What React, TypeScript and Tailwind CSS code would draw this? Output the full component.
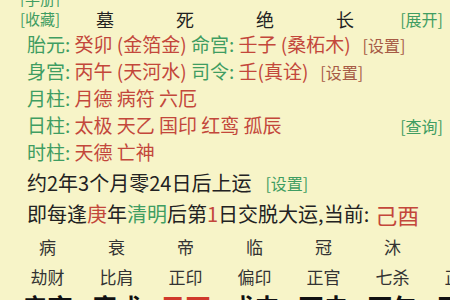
import React from "react";

const G = "text-[#3f9d62]";
const R = "text-[#c3473b]";
const B = "text-[#a65a45]";

function Cols({ items, className }: { items: React.ReactNode[]; className: string }) {
  return (
    <div className={"flex pl-[13px] shrink-0 " + className}>
      {items.map((t, i) => (
        <div key={i} className="w-[69px] shrink-0 text-center whitespace-nowrap">
          {t}
        </div>
      ))}
    </div>
  );
}

export default function App() {
  return (
    <div
      className="w-[450px] h-[300px] overflow-hidden bg-[#f7f4c8] text-[#222] flex flex-col"
      style={{ fontFamily: '"Noto Sans CJK SC", "Noto Sans", sans-serif' }}
    >
      <div className="h-[7px] shrink-0 overflow-hidden flex items-end pl-[20px]">
        <span className={"text-[15px] leading-[16px] " + G}>[手册]</span>
      </div>
      <div className="h-[24px] shrink-0 flex items-center pl-[20px] pr-[7px]">
        <span className={"w-[45px] text-[15px] " + G}>[收藏]</span>
        {["墓", "死", "绝", "长"].map((c) => (
          <span key={c} className="w-[80px] text-center text-[18px] text-[#222]">
            {c}
          </span>
        ))}
        <span className={"ml-auto text-[16px] " + G}>[展开]</span>
      </div>
      <div className="h-[27px] shrink-0 flex items-center pl-[27px] text-[19px] whitespace-nowrap">
        <span className={G}>胎元: </span>
        <span className={R}>&nbsp;癸卯 (金箔金)&nbsp;</span>
        <span className={G}>命宫: </span>
        <span className={R}>&nbsp;壬子 (桑柘木)</span>
        <span className={"ml-[12px] text-[16px] " + B}>[设置]</span>
      </div>
      <div className="h-[27px] shrink-0 flex items-center pl-[27px] text-[19px] whitespace-nowrap">
        <span className={G}>身宫: </span>
        <span className={R}>&nbsp;丙午 (天河水)&nbsp;</span>
        <span className={G}>司令: </span>
        <span className={R}>&nbsp;壬(真诠)</span>
        <span className={"ml-[12px] text-[16px] " + B}>[设置]</span>
      </div>
      <div className="h-[27px] shrink-0 flex items-center pl-[27px] text-[19px] whitespace-nowrap">
        <span className={G}>月柱: </span>
        <span className={R}>&nbsp;月德 病符 六厄</span>
      </div>
      <div className="h-[27px] shrink-0 flex items-center pl-[27px] pr-[7px] text-[19px] whitespace-nowrap">
        <span className={G}>日柱: </span>
        <span className={R}>&nbsp;太极 天乙 国印 红鸾 孤辰</span>
        <span className={"ml-auto text-[16px] " + G}>[查询]</span>
      </div>
      <div className="h-[27px] shrink-0 flex items-center pl-[27px] text-[19px] whitespace-nowrap">
        <span className={G}>时柱: </span>
        <span className={R}>&nbsp;天德 亡神</span>
      </div>
      <div className="h-[33px] shrink-0 flex items-center pl-[27px] text-[20px] whitespace-nowrap text-[#222]">
        <span>约2年3个月零24日后上运</span>
        <span className={"ml-[14px] text-[16px] " + G}>[设置]</span>
      </div>
      <div className="h-[30px] shrink-0 flex items-center pl-[27px] text-[20px] whitespace-nowrap text-[#222]">
        <span>即每逢</span>
        <span className={R}>庚</span>
        <span>年</span>
        <span className={G}>清明</span>
        <span>后第</span>
        <span className={R}>1</span>
        <span>日交脱大运,当前: </span>
        <span className={"ml-[6px] text-[22px] " + R}>己酉</span>
      </div>
      <Cols
        className="h-[36px] items-center text-[17px] leading-[22px] text-[#333]"
        items={["病", "衰", "帝", "临", "冠", "沐", ""]}
      />
      <Cols
        className="h-[24px] items-center text-[17px] leading-[22px] text-[#333]"
        items={["劫财", "比肩", "正印", "偏印", "正官", "七杀", "正财"]}
      />
      <Cols
        className="h-[30px] pt-[2px] items-start text-[25px] font-bold leading-[30px] text-[#111]"
        items={[
          "辛亥",
          "庚戌",
          <span className="text-[#d0392b]">己酉</span>,
          "戊申",
          "丁未",
          "丙午",
          "乙巳",
        ]}
      />
    </div>
  );
}
